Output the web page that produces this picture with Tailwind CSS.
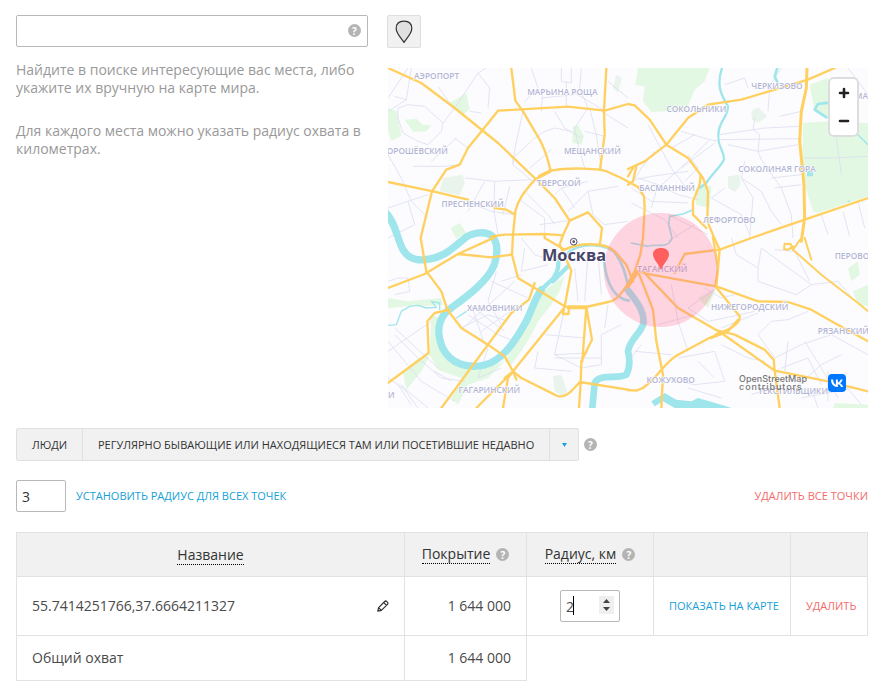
<!DOCTYPE html>
<html lang="ru">
<head>
<meta charset="utf-8">
<meta name="viewport" content="width=device-width, initial-scale=1">
<title>Места</title>
<script src="https://cdn.jsdelivr.net/npm/@tailwindcss/browser@4"></script>
</head>
<body class="bg-white font-['Open_Sans','Noto_Sans',sans-serif] text-sm text-[#333]">
<main class="pt-[15px] pr-[14px] pb-1 pl-4">
  <section class="grid grid-cols-[352px_1fr] gap-x-5">
    <div>
      <div class="relative">
        <input type="text" aria-label="Поиск места" class="block h-8 w-full rounded-xs border border-[#b8b8b8] bg-white pr-8 pl-2 outline-none">
        <button type="button" aria-label="Справка о поиске" class="absolute top-[9px] right-[7px] flex size-[13px] items-center justify-center rounded-full bg-[#b4b4b4] text-[10px] leading-none font-bold text-white">?</button>
      </div>
      <p class="mt-[14px] leading-[18px] text-[#999]">Найдите в поиске интересующие вас места, либо укажите их вручную на карте мира.</p>
      <p class="mt-[25px] leading-[18px] text-[#999]">Для каждого места можно указать радиус охвата в километрах.</p>
    </div>
    <div>
      <button type="button" aria-label="Поставить точку" class="-ml-px flex h-[33px] w-[34px] items-center justify-center rounded-xs border border-[#dedede] bg-[#f1f1f1]">
        <svg class="h-6 w-[18px]" viewBox="0 0 18 24" fill="#e0e0e0" stroke="#333" stroke-width="1.2" stroke-linejoin="round"><path d="M9 22.5C6.5 18.500 1.200 13.500 1.200 8.500C1.200 3.500 4.200 1.200 9 1.200S16.800 3.500 16.800 8.500C16.800 13.500 11.500 18.500 9 22.500Z"/></svg>
      </button>
      <div class="relative mt-5 overflow-hidden">
        <svg class="block h-[340px] w-full" viewBox="0 0 1440 1020" preserveAspectRatio="xMidYMid slice" role="img" aria-label="Карта Москвы">
          <rect width="1440" height="1020" fill="#fcfcfe"/>
          <g fill="#e2f8e2">
            <path d="M750 0H965L950 40L920 65L895 125L840 130L790 132L765 100L770 55L742 52Z"/>
            <path d="M1245 165L1320 160L1440 165V385L1290 435L1275 430L1250 350L1243 250Z"/>
            <path d="M1265 50L1320 30L1340 90L1320 150L1280 130Z"/>
            <path d="M0 120L28 130L40 205L10 218L0 190Z"/><path d="M50 155L85 152L105 170L130 172L115 190L75 192Z"/>
            <path d="M555 175L570 170L588 205L580 230L553 225Z"/><path d="M185 105L235 75L245 125L225 140L190 120Z"/>
            <path d="M188 480L215 465L235 495L205 512Z"/>
            <path d="M940 350L970 355L965 420L925 410L920 370Z"/>
            <path d="M530 625L515 670L490 710L450 760L430 800L400 850L370 890L350 880L410 775L465 670Z"/>
            <path d="M130 740L155 750L145 790L165 850L205 895L270 905L350 880L300 930L240 950L210 1010L190 990L220 930L150 905L125 860Z"/>
            <path d="M45 915L90 870L125 865L100 910L55 965Z"/>
            <path d="M1380 600L1410 580L1415 620L1390 640Z"/><path d="M1395 670L1440 650V715L1410 710Z"/>
            <path d="M0 690L60 700L160 690L165 712L60 715L0 720Z"/>
            <path d="M985 660L960 720L930 690Z"/><path d="M1340 1005L1440 1010V1020H1335Z"/>
          </g>
          <g fill="#e8f4ec">
            <path d="M165 330L225 320L230 345L215 382L155 370Z"/><path d="M1090 130L1110 118L1138 145L1110 165L1092 155Z"/>
            <path d="M1020 325L1055 320L1058 350L1040 372L1020 360Z"/><path d="M495 925L520 920L538 970L525 985L500 970Z"/><path d="M685 20L702 30L690 75L675 60Z"/>
          </g>
          <g fill="none" stroke="#dcdef0" stroke-width="2.500">
            <path d="M70 0L55 95L0 130M30 120L60 110L110 115L165 165L160 190L120 230L90 220L45 195L30 150ZM165 165L200 120L270 15L295 0M270 15L305 60L300 120M185 105L150 55M245 130L280 135M60 0L0 90M55 95L20 85M0 260L40 330L70 400L120 450M75 295L170 295L215 290M60 400L120 380M0 420L60 400L80 470L0 510M200 210L240 240M130 280L205 210"/>
            <path d="M375 270L440 210L470 190M375 290L382 235L405 130M425 300L490 245M375 270L375 290L440 345M230 330L320 340L430 335M320 340L318 430L330 500M240 430L290 340M235 400L310 430L380 440M345 440L365 355M410 370L480 440L500 470M395 395L470 450L470 500M455 470L540 458M500 380L520 360L600 340M540 430L600 370L690 355M600 370L615 440L650 470L720 460M520 360L560 420"/>
            <path d="M520 0V40L550 45V0M535 40V120M460 90L560 80M465 60L460 130M580 0L575 60L600 120L560 180L570 230L590 300M605 120L625 200L640 300M500 130L530 180L580 210M590 190L650 205M560 75L650 128M470 190L500 180L550 190"/>
            <path d="M780 170L850 300L895 360M800 250L760 300L740 335L790 325L900 310M880 190L965 215L995 220M995 200L1130 180L1235 175M995 215L1240 212M965 215L900 280L800 370M980 225L880 300M1020 230L1110 250L1230 230M1110 250L1115 200L1095 185L1100 150M1080 60L1070 30L1010 50M1110 250L1120 275L1180 360L1210 440L1215 510M1070 280L1060 330L1095 390L1085 510M1060 330L1120 370L1150 430L1180 470M1150 330L1240 320M1160 360L1240 350M1010 360L970 390L1060 440L1085 500M1240 130L1175 145M1250 270L1340 270L1440 265M1340 170L1360 320M1140 130L1145 60"/>
            <path d="M750 330L810 350L870 380L930 395M810 350L790 420M730 360L790 400L900 405M900 260L930 300L890 340M730 405L830 455L870 510M840 440L960 500M920 470L840 520M1365 430L1385 505M1410 400L1430 480M1300 440L1320 500"/>
            <path d="M1110 600L1120 540L1270 650L1225 680L1110 640ZM1160 545L1220 550L1265 640M1030 510L1045 560L1110 600M1270 650L1350 640L1400 700M1150 760L1200 755L1260 730M1150 760L1110 800L1160 870M1200 820L1190 910M1160 870L1240 830L1330 800L1440 860M1180 900L1260 870L1300 950M1220 960L1300 890L1360 860M1320 910V1000M1250 820L1300 900L1350 990M1240 990L1400 960M1270 960L1290 1020M1360 940L1420 1010M1090 980L1180 950"/>
            <path d="M850 650L870 760L900 850M780 760L720 830M810 770L920 740M950 660L1000 690L1040 680M985 660L900 720L960 760L1010 750L1100 730M1000 780L1110 735M870 870L980 850L1010 940L920 950L830 930M930 880L980 930M850 860L740 850M760 830L720 880M1000 830L1080 870L1130 880M900 960L1000 990"/>
            <path d="M0 640L30 630L60 630L65 670L20 680M130 760L0 850M0 820L100 940L200 1000M20 800L90 870L160 930L230 940M40 950L90 1020M0 930L60 970L120 1020M225 780L380 640M250 710L290 830M240 740L330 800L380 820M280 790L380 720M310 640L420 690M325 610L300 700L340 770M340 640L400 620M220 780L300 740L360 760M270 730L350 790M400 510L440 560L500 580M410 540L400 610L480 590M570 520L600 560L590 700M530 720L500 860L580 900L640 890L640 800L700 770M500 860L600 855M500 870L640 870M470 800L590 810M450 850L440 900L550 910M560 600L570 700M630 560L640 680M660 710L650 780M300 840L270 930L340 900"/>
            <path d="M20 780L150 900M30 950L70 1010M140 910L190 940M430 0L450 60L410 100M640 130L720 180M660 40L720 90M850 240L920 200M1180 0L1140 60M1380 0L1440 80"/>
          </g>
          <g fill="none" stroke="#9fe5ec" stroke-linecap="round" stroke-linejoin="round">
            <path stroke-width="22" d="M-10 430C18 455 25 500 38 530C50 567 80 578 110 575C165 570 190 545 225 515C250 492 295 487 314 506C332 530 329 560 318 592C300 640 230 690 192 718C150 745 144 790 163 838C188 890 240 902 290 891C340 878 375 830 410 768C430 733 440 690 460 665"/>
            <path stroke-width="13" d="M455 672C480 640 500 640 510 600L512 570M495 640L540 595"/>
            <path stroke-width="8" d="M535 560C570 520 660 525 685 560C705 590 710 610 722 660M648 580C655 640 675 690 722 698"/>
            <path stroke-width="20" d="M718 665C755 710 772 740 765 770C755 800 725 815 720 850C725 870 728 895 715 920C690 935 635 915 620 945L613 1020"/>
            <path stroke-width="7" d="M1002 0C985 50 998 80 1020 115C1020 145 998 155 992 190C985 240 1010 245 1008 275C995 300 965 325 955 345L935 360"/>
            <path stroke-width="5" d="M915 425L885 438L845 445L842 470L852 510C840 545 810 525 780 535L730 525"/>
            <path stroke-width="8" d="M1168 0L1160 25L1168 42M1330 103L1290 108L1280 125L1315 148"/>
            <path stroke-width="4" d="M0 772L25 770L40 730L65 715L90 712L115 720L145 718L130 700L155 705L155 725M1380 400L1385 400M1410 200L1440 230M205 750L235 730"/>
          </g>
          <g fill="#9fe5ec"><path d="M790 1000L830 975L865 995L910 1000L930 990L1000 1010L1030 1020H860L825 1000L800 1015Z"/><path d="M1257 310L1275 305V325H1257Z"/></g>
          <g fill="none" stroke="#ffd05f" stroke-width="7" stroke-linejoin="round" stroke-linecap="round">
            <path d="M0 0L100 45L200 120L330 225L440 330L500 390L545 458"/>
            <path d="M370 0L382 98L405 130L455 215C475 250 480 280 488 308"/>
            <path d="M132 370L175 305L215 290L240 240L282 188L330 128L540 116L650 128L720 108L740 112L785 155L835 230L900 270L945 330L960 370L958 460L978 508L995 545L985 655M938 320L935 350L915 400L915 440L955 480"/>
            <path d="M655 0L648 128L650 200L636 305"/>
            <path d="M440 335L488 308C540 298 640 300 660 312L700 330L750 357L768 385L770 420L765 510L757 560L740 610L715 655C690 690 680 698 660 702L595 717L530 715L445 663L390 630L372 560L375 500L382 430C390 390 420 360 440 335"/>
            <path d="M0 342L135 370L240 395M320 420L355 425L382 440"/>
            <path d="M132 370L98 510L115 610L160 670L178 725L220 780L300 830L350 865L375 910L400 930L500 980C530 997 550 970 575 942L720 965"/>
            <path d="M718 966L745 968L765 960"/>
            <path d="M310 505L350 500L470 498L525 502L545 458L600 433L642 480L636 528M470 498V510L530 545M525 502L515 530L550 608L530 715M530 545C570 525 650 520 680 550L715 590L735 640"/>
            <path d="M0 660L110 618L210 558L320 508M210 558L310 568L370 560"/>
            <path d="M160 1020L300 830L370 735L423 695L440 645"/>
            <path d="M265 1020L375 910L528 720M345 1020L360 930L375 910M350 930L375 910L385 935"/>
            <path d="M0 945L122 855L118 760L140 735L185 725"/>
            <path d="M528 720L525 738H542V720L600 717M595 717L612 815L580 880L578 945L573 1020M595 717L583 880"/>
            <path d="M720 303L770 280L835 230L900 150L960 110L1060 95L1160 65L1260 35L1340 0"/>
            <path stroke-width="9" d="M1257 0L1255 60L1240 130L1235 220L1248 350L1250 450L1240 520"/>
            <path d="M1440 390L1250 455L1090 510L995 545L890 558L860 615"/>
            <path d="M975 508L990 600L982 655L1055 745C1060 770 1010 790 960 812L870 860C820 890 820 920 765 960"/>
            <path d="M750 610L795 725L805 820L825 920L820 1020"/>
            <path d="M750 610L790 620L985 655L1110 700L1200 702L1270 725L1340 765L1440 820"/>
            <path d="M765 610L870 720L1000 795L1160 908L1320 940L1440 970M990 788L1040 800L1130 845L1157 875L1160 908L1175 1020M1050 755L1020 790L970 810"/>
            <path stroke-width="6" d="M1240 510L1215 545L1300 620L1410 705L1440 730M1250 510L1270 575M1213 543L1208 528L1190 527L1188 543L1200 545L1215 535"/>
            <path d="M720 350L735 340L745 295M720 325L735 300"/>
            <path stroke-width="11" d="M540 718H595M720 655L748 612M455 325L485 310M985 800L1010 793"/>
          </g>
          <g font-family="Open Sans, Noto Sans, sans-serif" font-size="25" font-weight="600" fill="#b3b5d5" text-anchor="middle" stroke="#fff" stroke-width="3" paint-order="stroke">
            <text x="146" y="34">АЭРОПОРТ</text><text x="523" y="80">МАРЬИНА РОЩА</text><text x="80" y="258">ХОРОШЁВСКИЙ</text><text x="613" y="257">МЕЩАНСКИЙ</text><text x="512" y="353">ТВЕРСКОЙ</text><text x="254" y="418">ПРЕСНЕНСКИЙ</text><text x="1167" y="64">ЧЕРКИЗОВО</text><text x="925" y="133">СОКОЛЬНИКИ</text><text x="1167" y="311">СОКОЛИНАЯ ГОРА</text><text x="837" y="369">БАСМАННЫЙ</text><text x="1024" y="464">ЛЕФОРТОВО</text><text x="320" y="730">ХАМОВНИКИ</text><text x="304" y="975">ГАГАРИНСКИЙ</text><text x="1085" y="725">НИЖЕГОРОДСКИЙ</text><text x="1392" y="573">ПЕРОВО</text><text x="1366" y="798">РЯЗАНСКИЙ</text><text x="848" y="944">КОЖУХОВО</text><text x="1215" y="978">ТЕКСТИЛЬЩИКИ</text><text x="823" y="613">ТАГАНСКИЙ</text><text x="1420" y="92">МА</text><text x="10" y="990">И</text>
          </g>
          <circle cx="818" cy="606" r="171" fill="#ff6b93" fill-opacity=".28"/>
          <path d="M819 606C812 586 795 576 795 557C795 534 803 540 819 540S843 534 843 557C843 576 826 586 819 606Z" fill="none"/>
          <path d="M819 607C814 588 795 576 795 559C795 546 806 540 819 540C832 540 843 546 843 559C843 576 824 588 819 607Z" fill="#ff605f"/>
          <circle cx="557" cy="521" r="10" fill="#fff" stroke="#514d72" stroke-width="3"/><circle cx="557" cy="521" r="4" fill="#514d72"/>
          <text x="558" y="579" text-anchor="middle" font-family="Open Sans, Noto Sans, sans-serif" font-weight="700" font-size="49" fill="#474468" stroke="#fff" stroke-width="5" paint-order="stroke">Москва</text>
        </svg>
        <div class="absolute top-[9px] right-[9px] flex h-[60px] w-[31px] flex-col rounded-md border-2 border-[#ddd] bg-white text-[#222]">
          <button type="button" aria-label="Приблизить" class="flex flex-1 items-center justify-center"><svg class="size-3" viewBox="0 0 12 12" stroke="currentColor" stroke-width="2.600" stroke-linecap="round"><path d="M6 2V10M2 6H10"/></svg></button>
          <button type="button" aria-label="Отдалить" class="flex flex-1 items-center justify-center"><svg class="size-3" viewBox="0 0 12 12" stroke="currentColor" stroke-width="2.600" stroke-linecap="round"><path d="M2 6H10"/></svg></button>
        </div>
        <a href="#" class="absolute right-[61px] bottom-[17px] flex flex-col font-['Inter',sans-serif] text-[9px] leading-[8px] font-medium text-[#777]"><span>OpenStreetMap</span><span class="tracking-widest">contributors</span></a>
        <a href="#" aria-label="VK" class="absolute right-[22px] bottom-4">
          <svg class="size-[18px]" viewBox="0 0 18 18"><rect width="18" height="18" rx="4" fill="#07f"/><path d="M9.600 13C5.500 13 3.150 10.200 3.050 5.500H5.100C5.170 8.950 6.700 10.400 7.900 10.700V5.500H9.850V8.450C11 8.330 12.300 6.980 12.700 5.500H14.600C14.300 7.300 13 8.650 12 9.230C13 9.690 14.500 10.800 15.100 13H13C12.600 11.600 11.450 10.530 9.850 10.370V13Z" fill="#fff"/></svg>
        </a>
      </div>
    </div>
  </section>

  <div class="mt-5 flex items-center gap-[5px]">
    <div class="flex h-[33px] rounded-xs border border-[#e0e0e0] bg-[#f1f1f1] text-[11px]">
      <button type="button" class="w-[66px] border-r border-[#e0e0e0]">ЛЮДИ</button>
      <div class="relative">
        <select aria-label="Тип посещения" class="h-full w-[495px] appearance-none bg-transparent pr-8 pl-[15px] outline-none"><option>РЕГУЛЯРНО БЫВАЮЩИЕ ИЛИ НАХОДЯЩИЕСЯ ТАМ ИЛИ ПОСЕТИВШИЕ НЕДАВНО</option></select>
        <span class="pointer-events-none absolute inset-y-0 right-0 flex w-[29px] items-center justify-center border-l border-[#e0e0e0]"><svg class="h-1 w-[5px]" viewBox="0 0 5 4"><path d="M0 0H5L2.500 4Z" fill="#16a5dc"/></svg></span>
      </div>
    </div>
    <button type="button" aria-label="Справка о типе посещения" class="flex size-[13px] items-center justify-center rounded-full bg-[#b4b4b4] text-[10px] leading-none font-bold text-white">?</button>
  </div>

  <div class="mt-[19px] flex items-center text-[11px]">
    <input type="text" inputmode="numeric" value="3" aria-label="Радиус для всех точек" class="h-8 w-[50px] rounded-xs border border-[#b8b8b8] px-[5px] text-sm outline-none">
    <button type="button" class="ml-[10px] text-[#16a0d8]">УСТАНОВИТЬ РАДИУС ДЛЯ ВСЕХ ТОЧЕК</button>
    <button type="button" class="ml-auto text-[#f26b6b]">УДАЛИТЬ ВСЕ ТОЧКИ</button>
  </div>

  <table class="mt-5 w-full table-fixed border-collapse">
    <colgroup><col><col class="w-[122px]"><col class="w-[127px]"><col class="w-[137px]"><col class="w-[77px]"></colgroup>
    <thead>
      <tr class="h-11 bg-[#f1f1f1]">
        <th scope="col" class="border border-[#e2e2e2] font-normal"><span class="inline-block border-b border-dotted border-black leading-[18px]">Название</span></th>
        <th scope="col" class="border border-[#e2e2e2] font-normal"><div class="flex items-center justify-center gap-[6px]"><span class="border-b border-dotted border-black leading-[18px]">Покрытие</span><button type="button" aria-label="Справка о покрытии" class="flex size-[13px] items-center justify-center rounded-full bg-[#b4b4b4] text-[10px] leading-none font-bold text-white">?</button></div></th>
        <th scope="col" class="border border-[#e2e2e2] font-normal"><div class="flex items-center justify-center gap-[6px]"><span class="border-b border-dotted border-black leading-[18px]">Радиус, км</span><button type="button" aria-label="Справка о радиусе" class="flex size-[13px] items-center justify-center rounded-full bg-[#b4b4b4] text-[10px] leading-none font-bold text-white">?</button></div></th>
        <td class="border border-[#e2e2e2]"></td>
        <td class="border border-[#e2e2e2]"></td>
      </tr>
    </thead>
    <tbody class="text-[#4a4a4a]">
      <tr class="h-[59px]">
        <td class="border border-[#e2e2e2] px-[15px]"><div class="flex items-center justify-between"><span>55.7414251766,37.6664211327</span><button type="button" aria-label="Переименовать"><svg class="size-3" viewBox="0 0 12 12" fill="none" stroke="#333" stroke-width="1.200" stroke-linejoin="round"><path d="M.8 11.200L1.600 7.600L7.700 1.500Q8.700.5 9.700 1.500L10.500 2.300Q11.500 3.300 10.500 4.300L4.400 10.400ZM6.700 2.500L9.500 5.300M1.600 7.600L4.400 10.400"/></svg></button></div></td>
        <td class="border border-[#e2e2e2] px-[15px] text-right">1 644 000</td>
        <td class="border border-[#e2e2e2]">
          <div class="relative mx-auto w-[60px]">
            <input type="text" inputmode="numeric" value="2" aria-label="Радиус, км" class="block h-8 w-full rounded-xs border border-[#b8b8b8] px-[5px] outline-none">
            <span class="absolute top-[6px] left-[13px] h-[19px] w-px bg-black"></span>
            <div class="absolute top-[6px] right-[6px] flex h-[18px] w-[15px] flex-col bg-[#efefef]">
              <button type="button" aria-label="Больше" class="flex flex-1 items-end justify-center pb-[2px]"><svg class="h-1 w-[7px]" viewBox="0 0 7 4"><path d="M0 4H7L3.500 0Z" fill="#444"/></svg></button>
              <button type="button" aria-label="Меньше" class="flex flex-1 items-start justify-center pt-[2px]"><svg class="h-1 w-[7px]" viewBox="0 0 7 4"><path d="M0 0H7L3.500 4Z" fill="#444"/></svg></button>
            </div>
          </div>
        </td>
        <td class="border border-[#e2e2e2] pl-[15px] text-left text-[11px] whitespace-nowrap"><button type="button" class="text-[#16a0d8]">ПОКАЗАТЬ НА КАРТЕ</button></td>
        <td class="border border-[#e2e2e2] pl-[15px] text-left text-[11px] whitespace-nowrap"><button type="button" class="text-[#f26b6b]">УДАЛИТЬ</button></td>
      </tr>
      <tr class="h-[45px]">
        <td class="border border-[#e2e2e2] px-[15px]">Общий охват</td>
        <td class="border border-[#e2e2e2] px-[15px] text-right">1 644 000</td>
      </tr>
    </tbody>
  </table>
</main>
</body>
</html>
